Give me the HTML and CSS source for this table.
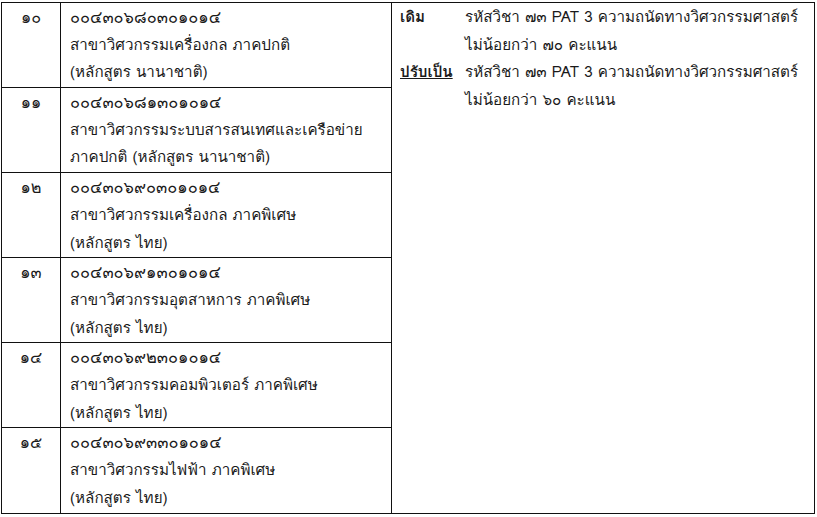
FILE: index.html
```html
<!DOCTYPE html>
<html lang="th">
<head>
<meta charset="utf-8">
<link rel="stylesheet" href="styles.css">
</head>
<body>
<table class="grid">
  <colgroup>
    <col class="c-no">
    <col class="c-code">
    <col class="c-note">
  </colgroup>
  <tr>
    <td class="no">๑๐</td>
    <td class="prog"><div class="code">๐๐๔๓๐๖๘๐๓๐๑๐๑๔</div><div>สาขาวิศวกรรมเครื่องกล ภาคปกติ</div><div>(หลักสูตร นานาชาติ)</div></td>
    <td class="note" rowspan="6">
      <div class="nrow"><span class="lbl">เดิม</span><span class="txt">รหัสวิชา ๗๓ PAT 3 ความถนัดทางวิศวกรรมศาสตร์<br>ไม่น้อยกว่า ๗๐ คะแนน</span></div>
      <div class="nrow"><span class="lbl ul">ปรับเป็น</span><span class="txt">รหัสวิชา ๗๓ PAT 3 ความถนัดทางวิศวกรรมศาสตร์<br>ไม่น้อยกว่า ๖๐ คะแนน</span></div>
    </td>
  </tr>
  <tr>
    <td class="no">๑๑</td>
    <td class="prog"><div class="code">๐๐๔๓๐๖๘๑๓๐๑๐๑๔</div><div>สาขาวิศวกรรมระบบสารสนเทศและเครือข่าย</div><div>ภาคปกติ (หลักสูตร นานาชาติ)</div></td>
  </tr>
  <tr>
    <td class="no">๑๒</td>
    <td class="prog"><div class="code">๐๐๔๓๐๖๙๐๓๐๑๐๑๔</div><div>สาขาวิศวกรรมเครื่องกล ภาคพิเศษ</div><div>(หลักสูตร ไทย)</div></td>
  </tr>
  <tr>
    <td class="no">๑๓</td>
    <td class="prog"><div class="code">๐๐๔๓๐๖๙๑๓๐๑๐๑๔</div><div>สาขาวิศวกรรมอุตสาหการ ภาคพิเศษ</div><div>(หลักสูตร ไทย)</div></td>
  </tr>
  <tr>
    <td class="no">๑๔</td>
    <td class="prog"><div class="code">๐๐๔๓๐๖๙๒๓๐๑๐๑๔</div><div>สาขาวิศวกรรมคอมพิวเตอร์ ภาคพิเศษ</div><div>(หลักสูตร ไทย)</div></td>
  </tr>
  <tr>
    <td class="no">๑๕</td>
    <td class="prog"><div class="code">๐๐๔๓๐๖๙๓๓๐๑๐๑๔</div><div>สาขาวิศวกรรมไฟฟ้า ภาคพิเศษ</div><div>(หลักสูตร ไทย)</div></td>
  </tr>
</table>
</body>
</html>
```
FILE: styles.css
```css
html, body {
  margin: 0;
  padding: 0;
  background: #fff;
}
body {
  font-family: "Loma", "DejaVu Sans", sans-serif;
  font-size: 15.2px;
  color: #1a1a1a;
}
.grid {
  border-collapse: collapse;
  margin: 2px 0 0 1px;
  width: 813px;
  table-layout: fixed;
}
.c-no { width: 59px; }
.c-code { width: 331px; }
.c-note { width: 423px; }
.grid td {
  border: 1px solid #111;
  vertical-align: top;
  line-height: 27.7px;
  padding: 0;
}
.grid td.no {
  text-align: center;
  padding-top: 1px;
  font-size: 16.2px;
}
.grid td.prog {
  padding: 1px 0 0 9px;
  white-space: nowrap;
}
.code {
  font-size: 16.4px;
  line-height: 27.7px;
  height: 27.7px;
}
.grid td.note {
  padding: 1px 4px 0 8px;
}
.nrow {
  display: flex;
}
.lbl {
  font-weight: bold;
  width: 65px;
  flex: none;
}
.ul {
  text-decoration: underline;
}
.txt {
  white-space: nowrap;
}
```
